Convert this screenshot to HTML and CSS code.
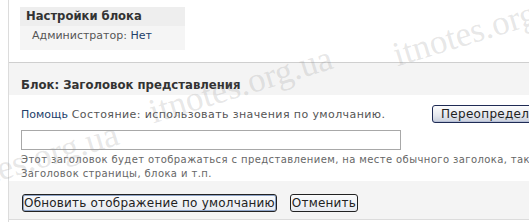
FILE: index.html
```html
<!DOCTYPE html>
<html lang="ru">
<head>
<meta charset="utf-8">
<title>Настройки блока</title>
<link rel="stylesheet" href="styles.css">
</head>
<body>
<div class="page">
  <div class="settings">
    <div class="settings-title">Настройки блока</div>
    <div class="settings-row">Администратор: <a class="link" href="#">Нет</a></div>
  </div>
  <div class="panel">
    <div class="panel-head">Блок: Заголовок представления</div>
    <div class="panel-body">
      <div class="status-row">
        <div class="status"><a class="link" href="#">Помощь</a> Состояние: использовать значения по умолчанию.</div>
        <button class="btn-xp">Переопределить</button>
      </div>
      <input class="text-input" type="text">
      <div class="desc">Этот заголовок будет отображаться с представлением, на месте обычного заголока, такого как<br>Заголовок страницы, блока и т.п.</div>
    </div>
    <div class="panel-foot">
      <button class="btn btn-focus">Обновить отображение по умолчанию</button>
      <button class="btn">Отменить</button>
    </div>
  </div>
</div>
<div class="wm wm1">itnotes.org.ua</div>
<div class="wm wm2">itnotes.org.ua</div>
<div class="wm wm3">itnotes.org.ua</div>
</body>
</html>
```
FILE: styles.css
```css
html, body {
  margin: 0;
  padding: 0;
  background: #fff;
  overflow: hidden;
}
body {
  width: 529px;
  height: 222px;
  position: relative;
  font-family: "DejaVu Sans", Verdana, sans-serif;
  font-size: 11px;
  color: #555;
}
.page {
  margin-left: 8px;
  border-left: 1px solid #dcdcdc;
  height: 222px;
  padding-top: 7px;
  box-sizing: border-box;
}
.settings {
  margin-left: 11px;
  width: 165px;
  height: 43px;
  background: #f5f5f5;
}
.settings-title {
  height: 19px;
  background: #eeeeee;
  font-weight: bold;
  font-size: 11.6px;
  color: #333;
  padding-left: 6px;
  line-height: 19px;
}
.settings-row {
  padding-left: 12px;
  line-height: 20px;
  color: #555;
}
.link {
  color: #22406a;
  text-decoration: none;
}
.panel {
  margin-top: 12px;
  border-top: 1px solid #cfcfcf;
  border-bottom: 1px solid #dcdcdc;
}
.panel-head {
  background: #f4f4f4;
  height: 32px;
  line-height: 44px;
  font-weight: bold;
  font-size: 11.7px;
  color: #333;
  padding-left: 12px;
}
.panel-body {
  background: #fff;
  padding: 10px 0 0 12px;
}
.status-row {
  display: flex;
  align-items: center;
  height: 18px;
}
.status {
  width: 411px;
  flex: none;
  letter-spacing: 0.4px;
}
.status .link {
  letter-spacing: 0;
}
.btn-xp {
  flex: none;
  height: 18px;
  padding: 0 8px;
  font-family: "DejaVu Sans", Verdana, sans-serif;
  font-size: 12px;
  letter-spacing: 0.3px;
  color: #222;
  border: 1px solid #1f2b55;
  border-radius: 3px;
  background: linear-gradient(#fdfdfd, #e4e7ee 60%, #c9cfdc);
  box-shadow: inset 0 -1px 0 #b7c0d6;
  white-space: nowrap;
}
.text-input {
  display: block;
  margin-top: 7px;
  width: 380px;
  height: 20px;
  box-sizing: border-box;
  border: 1px solid #a8a8a8;
  background: #fff;
  padding: 0;
}
.desc {
  margin-top: 3px;
  font-size: 10px;
  letter-spacing: 0.4px;
  line-height: 14px;
  color: #666;
  white-space: nowrap;
}
.panel-foot {
  background: #f4f4f4;
  height: 38px;
  box-sizing: border-box;
  padding: 13px 0 0 13px;
  display: flex;
  gap: 13px;
  align-items: flex-start;
}
.btn {
  height: 18px;
  padding: 0 1px;
  font-family: "DejaVu Sans", Verdana, sans-serif;
  font-size: 12px;
  letter-spacing: 0.2px;
  color: #222;
  border: 1px solid #222;
  border-radius: 3px;
  background: linear-gradient(#fafbfc, #e7eaf0);
  line-height: 16px;
}
.btn-focus {
  box-shadow: inset 0 0 0 1px #8ea4c8;
}
.wm {
  position: absolute;
  font-family: "Liberation Serif", serif;
  font-size: 35px;
  color: rgba(150, 150, 150, 0.24);
  transform: rotate(-17deg);
  transform-origin: left bottom;
  white-space: nowrap;
  pointer-events: none;
}
.wm1 { left: 400px; top: 35px; }
.wm2 { left: 156px; top: 92px; }
.wm3 { left: -58px; top: 168px; }
```
